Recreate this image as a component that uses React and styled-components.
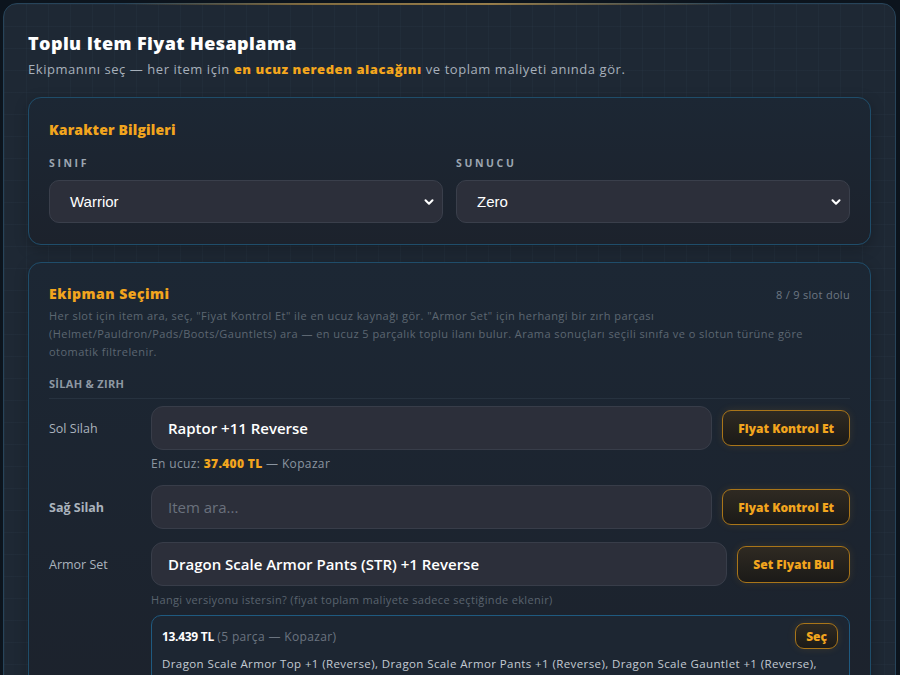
import React from "react";
import styled, { createGlobalStyle } from "styled-components";

const GlobalStyle = createGlobalStyle`
  html, body {
    margin: 0;
    padding: 0;
    background: #0c141d;
    overflow: hidden;
  }
  body {
    font-family: "Open Sans", "Noto Sans", sans-serif;
    color: #e6ebf0;
  }
`;

const Page = styled.div`
  padding: 3px 4px 0 3px;
  min-height: 672px;
  background-color: #0c141d;
`;

const Shell = styled.div`
  position: relative;
  min-height: 720px;
  border: 1px solid #27445a;
  border-radius: 14px;
  padding: 26px 24px 24px 24px;
  background-color: #1e2834;
  background-image:
    linear-gradient(rgba(120, 160, 200, 0.035) 1px, transparent 1px),
    linear-gradient(90deg, rgba(120, 160, 200, 0.035) 1px, transparent 1px);
  background-size: 22px 22px;
  box-sizing: border-box;

  &::before {
    content: "";
    position: absolute;
    top: -1px;
    left: 120px;
    right: 160px;
    height: 2px;
    background: linear-gradient(90deg, transparent, #a9823c 30%, #c79a4a 60%, transparent);
    opacity: 0.7;
  }
`;

const Title = styled.h1`
  margin: 0;
  font-size: 18px;
  font-weight: 800;
  color: #ffffff;
  letter-spacing: 0.4px;
  line-height: 26px;
`;

const Lead = styled.p`
  margin: 3px 0 18px 0;
  font-size: 13px;
  color: #a7b0bb;
  line-height: 20px;
  letter-spacing: 0.55px;

  strong {
    color: #f4a61d;
    font-weight: 800;
  }
`;

const Card = styled.section`
  border: 1px solid #1f4d6a;
  border-radius: 13px;
  padding: ${(p) => p.$pad || "21px 20px 21px 20px"};
  background: linear-gradient(180deg, #1c2734 0%, #1c222c 100%);
  box-shadow: 0 4px 14px rgba(0, 0, 0, 0.25);
  margin-bottom: 17px;
`;

const CardHead = styled.div`
  display: flex;
  justify-content: space-between;
  align-items: center;
`;

const CardTitle = styled.h2`
  margin: 0;
  font-size: 14px;
  font-weight: 800;
  color: #f2a51e;
  line-height: 22px;
  letter-spacing: ${(p) => (p.$wide ? 0.5 : 0.15)}px;
`;

const Counter = styled.span`
  font-size: 11px;
  color: #6d7783;
  letter-spacing: 0.3px;
`;

const FieldGrid = styled.div`
  display: grid;
  grid-template-columns: 1fr 1fr;
  gap: 13px;
  margin-top: 15px;
`;

const Field = styled.div`
  display: flex;
  flex-direction: column;
  gap: 10px;
`;

const FieldLabel = styled.label`
  font-size: 10.5px;
  font-weight: 700;
  letter-spacing: 2.6px;
  color: #9ca6b1;
  line-height: 14px;
`;

const Select = styled.div`
  display: flex;
  align-items: center;
  justify-content: space-between;
  height: 43px;
  padding: 0 6px 0 20px;
  border: 1px solid #3a3f4b;
  border-radius: 10px;
  background: #2c2f3a;
  font-family: "Liberation Sans", Arial, sans-serif;
  font-size: 15px;
  color: #ffffff;
  box-sizing: border-box;
`;

const Desc = styled.p`
  margin: 2px 0 15px 0;
  font-size: 11px;
  line-height: 18px;
  color: #5d6772;
  letter-spacing: 0.45px;
`;

const Group = styled.div`
  font-size: 11px;
  font-weight: 700;
  color: #8e98a3;
  padding-bottom: 7px;
  border-bottom: 1px solid #27323f;
  margin-bottom: 7px;
  line-height: 15px;
  letter-spacing: 0.3px;
`;

const Rows = styled.div`
  display: flex;
  flex-direction: column;
  gap: 13px;
`;

const Row = styled.div`
  display: grid;
  grid-template-columns: 92px 1fr auto;
  column-gap: 10px;
  row-gap: 6px;
  align-items: center;
`;

const RowLabel = styled.div`
  font-size: 12.5px;
  color: #aab3bd;
  font-weight: ${(p) => (p.$bold ? 700 : 400)};
`;

const Input = styled.input`
  height: 44px;
  padding: 0 16px;
  border: 1px solid #383d49;
  border-radius: 12px;
  background: #2c2f3a;
  color: #ffffff;
  font-family: "Open Sans", sans-serif;
  font-size: 15px;
  font-weight: 600;
  box-sizing: border-box;
  width: 100%;
  outline: none;

  &::placeholder {
    color: #6a717d;
    font-weight: 400;
  }
`;

const GoldButton = styled.button`
  height: ${(p) => p.$h || 36}px;
  padding: 0 ${(p) => p.$px || 15}px;
  border: 1px solid #a97519;
  border-radius: 9px;
  background: linear-gradient(180deg, #2f2a22 0%, #1b1a18 100%);
  color: #f2a51e;
  font-family: "Open Sans", sans-serif;
  font-size: 12px;
  font-weight: 800;
  box-shadow: 0 0 8px rgba(242, 165, 30, 0.12);
  white-space: nowrap;
`;

const Note = styled.div`
  grid-column: 2 / 4;
  font-size: ${(p) => (p.$dim ? 11 : 12)}px;
  color: ${(p) => (p.$dim ? "#5a636e" : "#8b95a0")};
  line-height: 16px;
  letter-spacing: 0.35px;

  b {
    color: #f2a51e;
    font-weight: 800;
  }
`;

const Offer = styled.div`
  grid-column: 2 / 4;
  border: 1px solid #1f5a80;
  border-radius: 10px;
  padding: 7px 11px 10px 10px;
  margin-top: 1px;
  background: #1d2632;
`;

const OfferHead = styled.div`
  display: flex;
  justify-content: space-between;
  align-items: center;
  font-size: 12px;
  color: #6b7480;
  letter-spacing: 0.35px;

  strong {
    color: #ffffff;
    font-weight: 700;
    letter-spacing: -0.3px;
  }
`;

const OfferItems = styled.div`
  margin-top: 6px;
  font-size: 11.5px;
  color: #c3cad2;
  line-height: 17px;
  letter-spacing: 0.4px;
`;

const Chevron = () => (
  <svg width="14" height="14" viewBox="0 0 24 24" fill="none" stroke="#ffffff" strokeWidth="3.5" strokeLinecap="round" strokeLinejoin="round">
    <path d="M6 9l6 6 6-6" />
  </svg>
);

export default function App() {
  return (
    <>
      <GlobalStyle />
      <Page>
        <Shell>
          <Title>Toplu Item Fiyat Hesaplama</Title>
          <Lead>
            Ekipmanını seç — her item için <strong>en ucuz nereden alacağını</strong> ve toplam maliyeti anında gör.
          </Lead>

          <Card>
            <CardTitle>Karakter Bilgileri</CardTitle>
            <FieldGrid>
              <Field>
                <FieldLabel>SINIF</FieldLabel>
                <Select>
                  Warrior
                  <Chevron />
                </Select>
              </Field>
              <Field>
                <FieldLabel>SUNUCU</FieldLabel>
                <Select>
                  Zero
                  <Chevron />
                </Select>
              </Field>
            </FieldGrid>
          </Card>

          <Card $pad="20px 20px 20px 20px">
            <CardHead>
              <CardTitle $wide>Ekipman Seçimi</CardTitle>
              <Counter>8 / 9 slot dolu</Counter>
            </CardHead>
            <Desc>
              Her slot için item ara, seç, "Fiyat Kontrol Et" ile en ucuz kaynağı gör. "Armor Set" için herhangi bir zırh parçası
              (Helmet/Pauldron/Pads/Boots/Gauntlets) ara — en ucuz 5 parçalık toplu ilanı bulur. Arama sonuçları seçili sınıfa ve o slotun türüne göre
              otomatik filtrelenir.
            </Desc>
            <Group>SİLAH &amp; ZIRH</Group>
            <Rows>
              <Row>
                <RowLabel>Sol Silah</RowLabel>
                <Input readOnly value="Raptor +11 Reverse" />
                <GoldButton>Fiyat Kontrol Et</GoldButton>
                <Note>
                  En ucuz: <b>37.400 TL</b> — Kopazar
                </Note>
              </Row>
              <Row>
                <RowLabel $bold>Sağ Silah</RowLabel>
                <Input readOnly placeholder="Item ara..." />
                <GoldButton>Fiyat Kontrol Et</GoldButton>
              </Row>
              <Row>
                <RowLabel>Armor Set</RowLabel>
                <Input readOnly value="Dragon Scale Armor Pants (STR) +1 Reverse" />
                <GoldButton $h={37}>Set Fiyatı Bul</GoldButton>
                <Note $dim>Hangi versiyonu istersin? (fiyat toplam maliyete sadece seçtiğinde eklenir)</Note>
                <Offer>
                  <OfferHead>
                    <span>
                      <strong>13.439 TL</strong> (5 parça — Kopazar)
                    </span>
                    <GoldButton $h={26} $px={10}>Seç</GoldButton>
                  </OfferHead>
                  <OfferItems>
                    Dragon Scale Armor Top +1 (Reverse), Dragon Scale Armor Pants +1 (Reverse), Dragon Scale Gauntlet +1 (Reverse),
                    Dragon Scale Boots +1 (Reverse), Dragon Scale Helmet +1 (Reverse)
                  </OfferItems>
                </Offer>
              </Row>
            </Rows>
          </Card>
        </Shell>
      </Page>
    </>
  );
}
